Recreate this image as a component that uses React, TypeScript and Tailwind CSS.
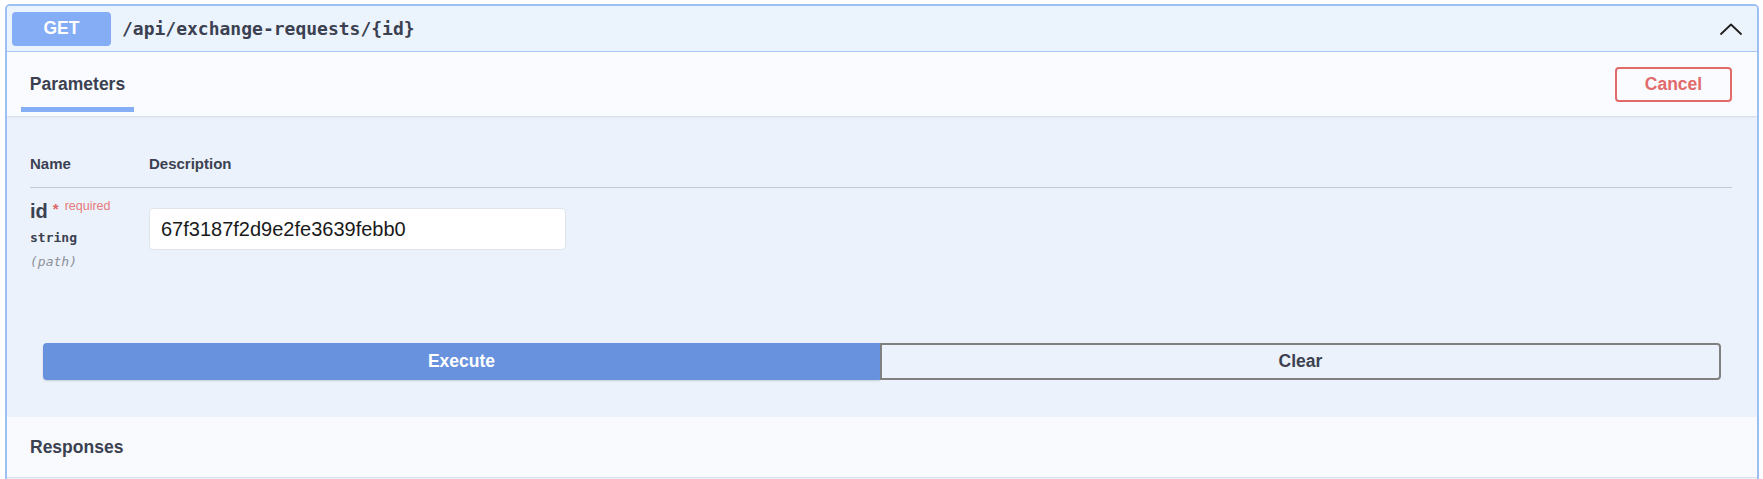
import React from "react";

const sans = "font-['Liberation_Sans',Arial,sans-serif]";
const mono = "font-['DejaVu_Sans_Mono','Liberation_Mono',monospace]";

function ChevronUp() {
  return (
    <svg width="22" height="12" viewBox="0 0 22 12" fill="none" aria-hidden="true">
      <polyline points="1,11 11,1.5 21,11" stroke="#1f1f1f" strokeWidth="1.8" strokeLinecap="round" strokeLinejoin="round" />
    </svg>
  );
}

function OpblockHeader() {
  return (
    <div className="flex h-[46px] items-center border-b border-[#a9c8f5] bg-[#ebf3fd] pl-[5px] pr-[15px]">
      <span className={`${sans} flex h-[34px] w-[99px] items-center justify-center rounded-[4px] bg-[#85adf6] text-[17.5px] font-bold text-white`}>
        GET
      </span>
      <span className={`${mono} ml-[11px] text-[18px] font-bold text-[#3b4151]`}>/api/exchange-requests/{"{id}"}</span>
      <span className="ml-auto flex items-center">
        <ChevronUp />
      </span>
    </div>
  );
}

function SectionHeader() {
  return (
    <div className="relative z-10 flex h-[64px] items-center bg-[#f9fbfe] pl-[14px] pr-[25px] shadow-[0_1px_2px_rgba(0,0,0,0.1)]">
      <div className="flex h-full w-[113px] flex-col items-center justify-end pb-[4px]">
        <span className={`${sans} text-[17.5px] leading-[20px] font-bold text-[#3b4151]`}>Parameters</span>
        <span className="mt-[13px] h-[5px] w-full bg-[#86aef5]" />
      </div>
      <button
        type="button"
        className={`${sans} ml-auto flex h-[35px] w-[117px] items-center justify-center rounded-[4px] border-2 border-[#e26a6a] text-[17.5px] font-bold text-[#e26a6a]`}
      >
        Cancel
      </button>
    </div>
  );
}

function ParamsTable() {
  return (
    <div className="px-[23px] pr-[25px]">
      <div className="grid h-[46px] grid-cols-[119px_1fr] items-center border-b border-[#c3c9d3]">
        <span className={`${sans} text-[15px] font-bold text-[#3b4151]`}>Name</span>
        <span className={`${sans} text-[15px] font-bold text-[#3b4151]`}>Description</span>
      </div>
      <div className="grid grid-cols-[119px_1fr] pt-[11px]">
        <div className="flex flex-col">
          <div className="flex h-[24px] items-start">
            <span className={`${sans} text-[20px] leading-[24px] font-bold text-[#3b4151]`}>id</span>
            <span className={`${sans} ml-[5px] mt-[-1px] text-[15px] font-bold text-[#e06666]`}>*</span>
            <span className={`${sans} ml-[6px] mt-[-2px] text-[12.5px] text-[#e77a7a]`}>required</span>
          </div>
          <span className={`${mono} mt-[5px] text-[13px] leading-[20px] font-semibold text-[#3b4151]`}>string</span>
          <span className={`${mono} mt-[4px] text-[13px] leading-[20px] italic text-[#8b909a]`}>(path)</span>
        </div>
        <div className="pt-[9px]">
          <input
            type="text"
            readOnly
            value="67f3187f2d9e2fe3639febb0"
            className={`${sans} h-[42px] w-[417px] rounded-[4px] border border-[#dfe3ea] bg-white px-[11px] text-[20px] text-[#1a1a1a] outline-none`}
          />
        </div>
      </div>
    </div>
  );
}

function ExecuteRow() {
  return (
    <div className="mx-[36px] mt-[71px] flex h-[37px]">
      <button
        type="button"
        className={`${sans} flex flex-1 items-center justify-center rounded-l-[4px] bg-[#6992de] text-[17.5px] font-bold text-white shadow-[0_1px_2px_rgba(0,0,0,0.15)]`}
      >
        Execute
      </button>
      <button
        type="button"
        className={`${sans} flex flex-1 items-center justify-center rounded-r-[4px] border-2 border-[#808080] text-[17.5px] font-bold text-[#3b4151]`}
      >
        Clear
      </button>
    </div>
  );
}

export default function App() {
  return (
    <div className="min-h-[479px] bg-white pl-[5px] pt-[4px]">
      <div className="w-[1754px] overflow-hidden rounded-[5px] border-2 border-[#9dc0f4]">
        <OpblockHeader />
        <SectionHeader />
        <div className="bg-[#ebf2fb] pb-[37px] pt-[26px]">
          <ParamsTable />
          <ExecuteRow />
        </div>
        <div className="flex h-[61px] items-center border-b border-[#dde3ec] bg-[#f8fafd] px-[23px] shadow-[0_1px_2px_rgba(0,0,0,0.08)]">
          <span className={`${sans} text-[17.5px] font-bold text-[#3b4151]`}>Responses</span>
        </div>
        <div className="h-[30px] bg-[#ebf2fb]" />
      </div>
    </div>
  );
}
